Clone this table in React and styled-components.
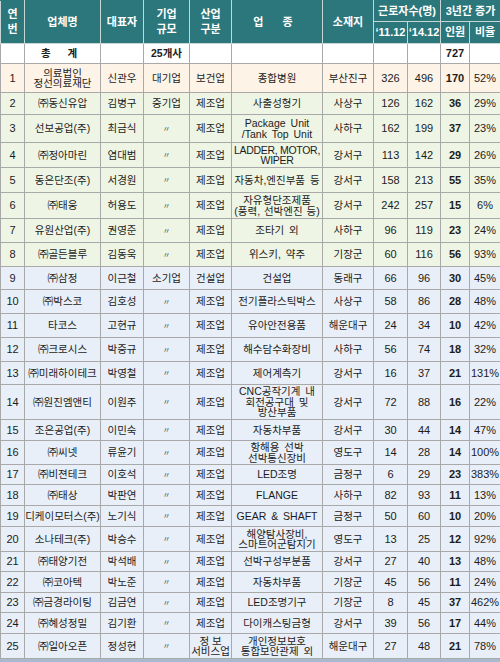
import React from 'react';
import styled, { createGlobalStyle } from 'styled-components';

const Global = createGlobalStyle`
  html, body { margin: 0; padding: 0; background: #ffffff; }
  body { font-family: "Liberation Sans", "Noto Sans CJK KR", sans-serif; }
`;

const Wrap = styled.div`
  width: 500px;
  border-bottom: 3px solid #a9bad0;
`;

const Table = styled.table`
  width: 500px;
  table-layout: fixed;
  border-collapse: collapse;
  font-size: 10.5px;
  color: #1c1c1c;
`;

const HeadCell = styled.th`
  background: #2c777c;
  color: #ffffff;
  font-weight: bold;
  font-size: 11px;
  line-height: 15px;
  padding: 0;
  text-align: center;
  vertical-align: middle;
  white-space: nowrap;
  border: 1px solid #c9d6d6;
  border-top-color: #2c777c;
`;

const HeadRow = styled.tr`
  height: ${p => p.$h}px;
`;

const Row = styled.tr`
  height: ${p => p.$h}px;
  background: ${p => (p.$tone === 'peach' ? '#fdf3e7' : p.$tone === 'green' ? '#eef5e5' : p.$tone === 'blue' ? '#e8eff8' : '#ffffff')};
`;

const Cell = styled.td`
  padding: 0;
  border: 1px solid #a9a9a9;
  text-align: center;
  vertical-align: middle;
  white-space: nowrap;
  line-height: ${p => (p.$tight ? '10.5px' : '11px')};
  font-size: ${p => (p.$num ? '11px' : '10.5px')};
  font-weight: ${p => (p.$bold ? 'bold' : 'normal')};
  word-spacing: ${p => (p.$ws != null ? p.$ws : 0)}px;
  letter-spacing: ${p => (p.$ls != null ? p.$ls : 0)}px;
  overflow: hidden;
`;

const Ditto = styled.span`
  font-size: 8px;
  color: #555;
`;

const Spaced = styled.span`
  letter-spacing: ${p => p.$ls || '6px'};
`;

const Lines = ({ t }) => {
  const parts = String(t).split('\n');
  return parts.map((p, i) => (
    <React.Fragment key={i}>
      {i > 0 && <br />}
      {p}
    </React.Fragment>
  ));
};

const rows = [
  [1, '의료법인\n정선의료재단', '신관우', '대기업', '보건업', '종합병원', '부산진구', 326, 496, 170, '52%', 29, 'peach'],
  [2, '㈜동신유압', '김병구', '중기업', '제조업', '사출성형기', '사상구', 126, 162, 36, '29%', 22, 'green'],
  [3, '선보공업(주)', '최금식', '〃', '제조업', 'Package Unit\n/Tank Top Unit', '사하구', 162, 199, 37, '23%', 28, 'green'],
  [4, '㈜정아마린', '염대범', '〃', '제조업', 'LADDER, MOTOR,\nWIPER', '강서구', 113, 142, 29, '26%', 25, 'green', 0, -0.3],
  [5, '동은단조(주)', '서경원', '〃', '제조업', '자동차,엔진부품 등', '강서구', 158, 213, 55, '35%', 25, 'green'],
  [6, '㈜태웅', '허용도', '〃', '제조업', '자유형단조제품\n(풍력, 선박엔진 등)', '강서구', 242, 257, 15, '6%', 26, 'green', 1],
  [7, '유원산업(주)', '권영준', '〃', '제조업', '조타기 외', '사하구', 96, 119, 23, '24%', 24, 'green'],
  [8, '㈜골든블루', '김동욱', '〃', '제조업', '위스키, 약주', '기장군', 60, 116, 56, '93%', 24, 'green'],
  [9, '㈜삼정', '이근철', '소기업', '건설업', '건설업', '동래구', 66, 96, 30, '45%', 23, 'blue'],
  [10, '㈜박스코', '김호성', '〃', '제조업', '전기플라스틱박스', '사상구', 58, 86, 28, '48%', 24, 'blue'],
  [11, '타코스', '고현규', '〃', '제조업', '유아안전용품', '해운대구', 24, 34, 10, '42%', 24, 'blue'],
  [12, '㈜크로시스', '박중규', '〃', '제조업', '해수담수화장비', '사하구', 56, 74, 18, '32%', 24, 'blue'],
  [13, '㈜미래하이테크', '박영철', '〃', '제조업', '제어계측기', '강서구', 16, 37, 21, '131%', 23, 'blue'],
  [14, '㈜원진엠앤티', '이원주', '〃', '제조업', 'CNC공작기계 내\n회전공구대 및\n방산부품', '강서구', 72, 88, 16, '22%', 35, 'blue'],
  [15, '조은공업(주)', '이민숙', '〃', '제조업', '자동차부품', '강서구', 30, 44, 14, '47%', 21, 'blue'],
  [16, '㈜씨넷', '류윤기', '〃', '제조업', '항해용 선박\n선박통신장비', '영도구', 14, 28, 14, '100%', 24, 'blue'],
  [17, '㈜비젼테크', '이호석', '〃', '제조업', 'LED조명', '금정구', 6, 29, 23, '383%', 20, 'blue'],
  [18, '㈜태상', '박판연', '〃', '제조업', 'FLANGE', '사하구', 82, 93, 11, '13%', 21, 'blue'],
  [19, '디케이모터스(주)', '노기식', '〃', '제조업', 'GEAR & SHAFT', '금정구', 50, 60, 10, '20%', 21, 'blue'],
  [20, '소나테크(주)', '박승수', '〃', '제조업', '해양탐사장비,\n스마트어군탐지기', '영도구', 13, 25, 12, '92%', 25, 'blue'],
  [21, '㈜태양기전', '박석배', '〃', '제조업', '선박구성부분품', '강서구', 27, 40, 13, '48%', 20, 'blue'],
  [22, '㈜코아텍', '박노준', '〃', '제조업', '자동차부품', '기장군', 45, 56, 11, '24%', 21, 'blue'],
  [23, '㈜금경라이팅', '김금연', '〃', '제조업', 'LED조명기구', '기장군', 8, 45, 37, '462%', 20, 'blue'],
  [24, '㈜혜성정밀', '김기환', '〃', '제조업', '다이캐스팅금형', '강서구', 39, 56, 17, '44%', 21, 'blue'],
  [25, '㈜일아오픈', '정성현', '〃', '정 보\n서비스업', '개인정보보호\n통합보안관제 외', '해운대구', 27, 48, 21, '78%', 25, 'blue'],
];

const widths = [24, 76, 43, 46, 42, 91, 51, 34, 33, 29, 31];

export default function App() {
  return (
    <>
      <Global />
      <Wrap>
        <Table>
          <colgroup>
            {widths.map((w, i) => (
              <col key={i} style={{ width: w }} />
            ))}
          </colgroup>
          <thead>
            <HeadRow $h={21}>
              <HeadCell rowSpan={2}>연<br />번</HeadCell>
              <HeadCell rowSpan={2}>업체명</HeadCell>
              <HeadCell rowSpan={2}>대표자</HeadCell>
              <HeadCell rowSpan={2}>기업<br />규모</HeadCell>
              <HeadCell rowSpan={2}>산업<br />구분</HeadCell>
              <HeadCell rowSpan={2}><Spaced $ls="8px">업 종</Spaced></HeadCell>
              <HeadCell rowSpan={2}>소재지</HeadCell>
              <HeadCell colSpan={2}>근로자수(명)</HeadCell>
              <HeadCell colSpan={2}>3년간 증가</HeadCell>
            </HeadRow>
            <HeadRow $h={22}>
              <HeadCell>‘11.12</HeadCell>
              <HeadCell>‘14.12</HeadCell>
              <HeadCell>인원</HeadCell>
              <HeadCell>비율</HeadCell>
            </HeadRow>
          </thead>
          <tbody>
            <Row $h={20} $tone="white">
              <Cell />
              <Cell $bold><Spaced $ls="7px">총 계</Spaced></Cell>
              <Cell />
              <Cell $bold>25개사</Cell>
              <Cell />
              <Cell />
              <Cell />
              <Cell />
              <Cell />
              <Cell $bold $num>727</Cell>
              <Cell />
            </Row>
            {rows.map(r => (
              <Row key={r[0]} $h={r[11]} $tone={r[12]}>
                <Cell $num>{r[0]}</Cell>
                <Cell $tight><Lines t={r[1]} /></Cell>
                <Cell>{r[2]}</Cell>
                <Cell>{r[3] === '〃' ? <Ditto>〃</Ditto> : r[3]}</Cell>
                <Cell $tight><Lines t={r[4]} /></Cell>
                <Cell $tight $ws={r[13] != null ? r[13] : 2} $ls={r[14]}><Lines t={r[5]} /></Cell>
                <Cell>{r[6]}</Cell>
                <Cell $num>{r[7]}</Cell>
                <Cell $num>{r[8]}</Cell>
                <Cell $num $bold>{r[9]}</Cell>
                <Cell $num>{r[10]}</Cell>
              </Row>
            ))}
          </tbody>
        </Table>
      </Wrap>
    </>
  );
}
